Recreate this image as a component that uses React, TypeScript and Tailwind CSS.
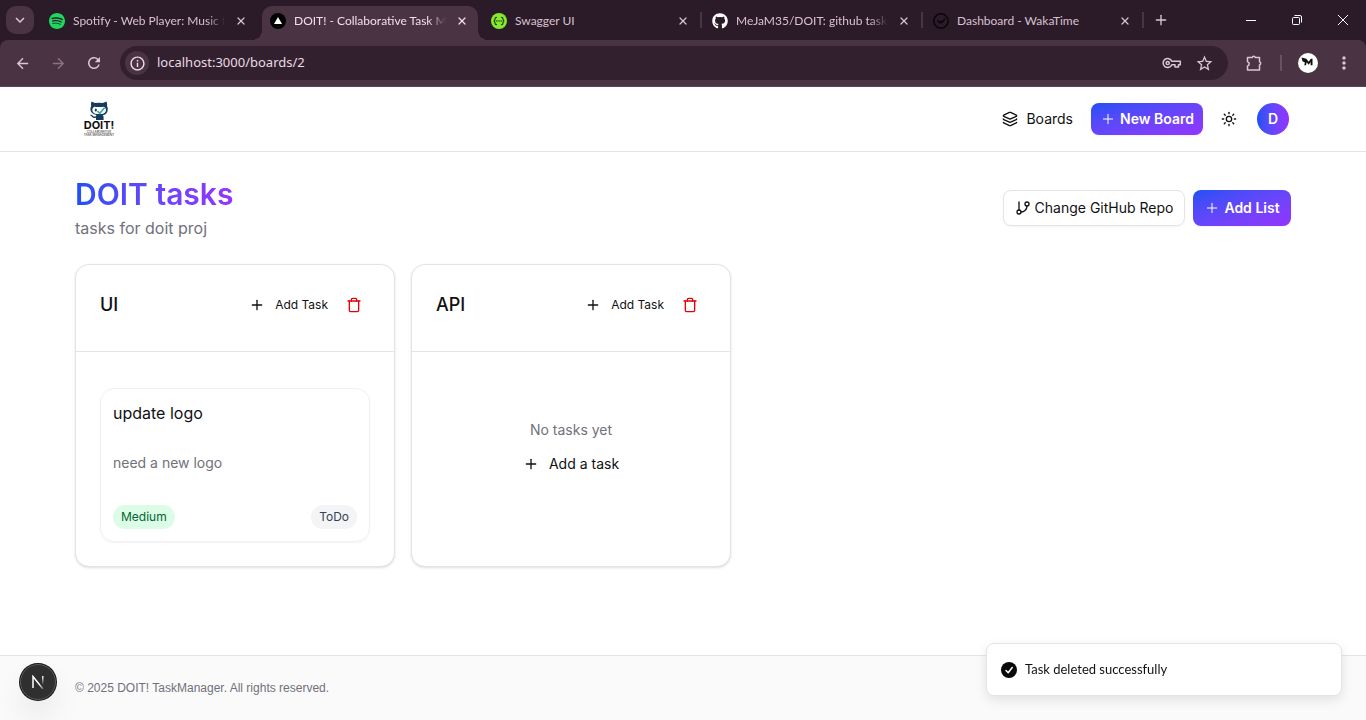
import type { ReactNode } from "react";
import { GitBranch, Layers, Plus, Sun, Trash, X } from "lucide-react";
import { FaGithub } from "react-icons/fa";
import { SiSpotify } from "react-icons/si";
import {
  MdArrowBack,
  MdArrowForward,
  MdInfoOutline,
  MdKeyboardArrowDown,
  MdMoreVert,
  MdRefresh,
  MdStarBorder,
} from "react-icons/md";

type Tab = { title: string; icon: ReactNode; active?: boolean; divider?: boolean; fade?: boolean };

const tabs: Tab[] = [
  {
    title: "Spotify - Web Player: Music f",
    fade: true,
    icon: <SiSpotify size={16} className="text-[#1ed760]" />,
  },
  {
    title: "DOIT! - Collaborative Task M",
    active: true,
    fade: true,
    icon: (
      <svg width="16" height="16" viewBox="0 0 16 16">
        <circle cx="8" cy="8" r="8" fill="#000" />
        <path d="M8 4l4 7H4z" fill="#fff" />
      </svg>
    ),
  },
  {
    title: "Swagger UI",
    divider: true,
    icon: (
      <svg width="16" height="16" viewBox="0 0 16 16" fill="none" stroke="#23401a" strokeLinecap="round">
        <circle cx="8" cy="8" r="8" fill="#85ea2d" stroke="none" />
        <path d="M5.500 4.300q-1.500 0-1.500 1.700T2.800 8q1.200.3 1.200 2t1.500 1.700M10.500 4.300q1.500 0 1.500 1.700t1.200 2q-1.200.3-1.200 2t-1.500 1.700" strokeWidth="1.200" />
        <path d="M5.800 8h.2M8 8h.1M10 8h.2" strokeWidth="1.400" />
      </svg>
    ),
  },
  {
    title: "MeJaM35/DOIT: github task",
    divider: true,
    fade: true,
    icon: <FaGithub size={16} className="text-white" />,
  },
  {
    title: "Dashboard - WakaTime",
    divider: true,
    icon: (
      <svg width="16" height="16" viewBox="0 0 16 16" fill="none" stroke="#0a0508" strokeWidth="1.500">
        <circle cx="8" cy="8" r="7.200" />
        <path d="M4.800 7.500l2 2.500 1.200-1.700.9 1.200L11.800 6" strokeWidth="1.300" strokeLinecap="round" strokeLinejoin="round" />
      </svg>
    ),
  },
];

function BrowserTab({ title, icon, active, divider, fade }: Tab) {
  return (
    <div className="relative flex h-[34px] w-[221px] min-w-0 pr-[5px]">
      {active && (
        <>
          <span className="absolute bottom-0 -left-2.5 size-2.5 bg-[radial-gradient(circle_at_0_0,transparent_10px,#4a3443_10px)]" />
          <span className="absolute right-[-5px] bottom-0 size-2.5 bg-[radial-gradient(circle_at_100%_0,transparent_10px,#4a3443_10px)]" />
        </>
      )}
      <div
        className={`flex min-w-0 flex-1 items-center gap-2 rounded-t-[10px] pr-2 pb-[5px] pl-2 ${active ? "bg-[#4a3443] text-[#f0dfe9]" : "text-[#d9c0d0]"}`}
      >
        <span className="shrink-0">{icon}</span>
        <span className={`min-w-0 flex-1 overflow-hidden text-xs whitespace-nowrap ${fade ? "mask-r-from-88%" : ""}`}>
          {title}
        </span>
        <button aria-label={`Close ${title}`} className="flex size-4 shrink-0 items-center justify-center">
          <X size={12} strokeWidth={2.5} />
        </button>
      </div>
      {divider && <span className="absolute top-1.5 right-0.5 h-4 w-0.5 bg-[#4a3443]" />}
    </div>
  );
}

function Browser() {
  return (
    <div className="bg-[#2b1b28] font-['Lato',sans-serif] text-[#dcc5d4]">
      <div className="flex h-10 items-end pl-1.5">
        <button aria-label="Search tabs" className="mb-1.5 flex size-7 items-center justify-center rounded-[10px] bg-[#4a3443]">
          <MdKeyboardArrowDown size={18} />
        </button>
        <div className="ml-[7px] flex min-w-0">
          {tabs.map((tab) => (
            <BrowserTab key={tab.title} {...tab} />
          ))}
        </div>
        <button aria-label="New tab" className="mb-[5px] flex h-[30px] w-[30px] items-center justify-center">
          <Plus size={16} />
        </button>
        <div className="ml-auto flex h-10 text-white">
          <button aria-label="Minimize" className="flex w-[46px] items-center justify-center">
            <svg width="10" height="10" stroke="currentColor"><path d="M0 5.500h10" /></svg>
          </button>
          <button aria-label="Restore" className="flex w-[46px] items-center justify-center">
            <svg width="10" height="10" fill="none" stroke="currentColor">
              <rect x=".5" y="2.500" width="7" height="7" rx="1" />
              <path d="M2.500.5H8q1.500 0 1.500 1.500v5.500" />
            </svg>
          </button>
          <button aria-label="Close window" className="flex w-[46px] items-center justify-center">
            <svg width="10" height="10" stroke="currentColor"><path d="M0 0l10 10M10 0L0 10" /></svg>
          </button>
        </div>
      </div>
      <div className="flex h-[47px] items-center rounded-t-lg border-b border-[#5b4655] bg-[#4a3443] pl-1">
        <button aria-label="Back" className="flex w-9 justify-center"><MdArrowBack size={17} /></button>
        <button aria-label="Forward" className="flex w-9 justify-center text-[#8b7283]"><MdArrowForward size={17} /></button>
        <button aria-label="Reload" className="flex w-9 justify-center"><MdRefresh size={18} /></button>
        <div className="ml-2 flex h-[34px] flex-1 items-center rounded-full bg-[#33202f] pr-4 pl-[5px]">
          <button aria-label="Site information" className="flex size-6 shrink-0 items-center justify-center rounded-full bg-[#4a3443] text-[#f0dfe9]">
            <MdInfoOutline size={17} />
          </button>
          <input
            aria-label="Address"
            defaultValue="localhost:3000/boards/2"
            className="ml-2 min-w-0 flex-1 bg-transparent font-['Noto_Sans',sans-serif] text-[13px] text-[#e9dbe4] outline-none"
          />
          <button aria-label="Passwords" className="flex w-8 justify-center">
            <svg width="20" height="12" viewBox="0 0 20 12" fill="none" stroke="currentColor" strokeWidth="1.500">
              <path d="M9.800 4.300A4.500 4.500 0 1 0 9.800 7.700H13V10h3.500V7.700H18.300V4.300z" strokeLinejoin="round" />
              <circle cx="5.700" cy="6" r="1.600" />
            </svg>
          </button>
          <button aria-label="Bookmark this tab" className="-mr-2 flex w-8 justify-center"><MdStarBorder size={19} /></button>
        </div>
        <button aria-label="Extensions" className="ml-2 flex w-9 justify-center">
          <svg width="18" height="18" viewBox="0 0 18 18" fill="none" stroke="currentColor" strokeWidth="1.500" strokeLinejoin="round">
            <path d="M2.500 3.500h4.700a1.600 1.600 0 0 1 3.100 0H14.500v4.300a1.600 1.600 0 0 1 0 3.100V16H2.500v-4a2.200 2.200 0 0 0 0-4.300z" />
          </svg>
        </button>
        <span className="mx-2 h-4 w-0.5 bg-[#69525f]" />
        <button aria-label="Profile" className="flex w-9 justify-center">
          <svg width="20" height="20" viewBox="0 0 20 20">
            <circle cx="10" cy="10" r="10" fill="#fff" />
            <path d="M3.500 4.500l4.800 1.300 2.400 2.900L12.800 5.800H14.500v6.400h-1.900V9L10.700 11.700 8.700 9.200 8 12.200H6.300l.6-2.700L4.500 8.200z" fill="#111" />
          </svg>
        </button>
        <button aria-label="Menu" className="flex w-9 justify-center"><MdMoreVert size={20} /></button>
        <span className="w-1" />
      </div>
    </div>
  );
}

function Logo() {
  return (
    <a href="#" className="flex w-12 flex-col items-center" aria-label="DOIT! home">
      <svg width="20" height="19" viewBox="0 0 20 19">
        <path
          d="M2.500.5l3.400 1.600q4-.7 8 0L17.500.5q.9 2.200.5 4.600 1.200 1.900.7 4.400-.8 4-4.900 4.700.9 1 .8 2.300v2.500H7v-2.200q-3 .5-4.300-1.400L1 14q1.700-.5 3 .9 1.200 1 3 .3l.3-1.300Q2.500 13 1.500 9.500 1 7 2.200 5.100 1.700 2.700 2.500.5z"
          fill="#153c5b"
        />
        <path d="M5.300 5.700q4.700.6 9.500 0 2.200.7 2.200 3.300-.2 3.700-4.700 4H8q-4.400-.3-4.700-4 0-2.600 2-3.300z" fill="#fff" />
        <ellipse cx="6.800" cy="9" rx="1.100" ry="1.600" fill="#153c5b" />
        <path d="M8.500 10l2.300 2.300 4.700-5.500" fill="none" stroke="#36a6a0" strokeWidth="1.600" />
      </svg>
      <span className="text-[11px] leading-[11px] font-bold">DOIT!</span>
      <span className="text-center text-[3px] leading-[3px]">
        COLLABORATIVE
        <br />
        TASK MANAGEMENT
      </span>
    </a>
  );
}

function ListCard({ title, children }: { title: string; children: ReactNode }) {
  return (
    <section className="flex w-80 flex-col rounded-[14px] border border-[#e4e4e7] bg-white shadow-sm">
      <div className="flex items-start justify-between border-b border-[#e4e4e7] px-6 pt-6 pb-[30px]">
        <h2 className="text-lg leading-8 font-medium">{title}</h2>
        <div className="flex items-center">
          <button className="flex h-8 items-center gap-2.5 px-2.5 text-xs">
            <Plus size={16} />
            Add Task
          </button>
          <button aria-label={`Delete ${title}`} className="flex h-8 w-8 items-center justify-center text-[#e7000b]">
            <Trash size={16} />
          </button>
        </div>
      </div>
      {children}
    </section>
  );
}

export default function App() {
  return (
    <div className="flex min-h-screen flex-col bg-white font-['Inter',sans-serif] text-[#111113]">
      <Browser />
      <header className="border-b border-[#e4e4e7]">
        <div className="mx-auto flex h-16 w-full max-w-7xl items-center justify-between px-8">
          <Logo />
          <nav className="flex items-center gap-2 text-sm">
            <a href="#" className="flex h-8 items-center gap-2 px-2.5">
              <Layers size={16} />
              Boards
            </a>
            <button className="flex h-8 w-28 items-center justify-center gap-1 rounded-lg bg-linear-to-br from-[#1c4ff5] to-[#9333ff] font-semibold whitespace-nowrap text-white shadow-xs">
              <Plus size={16} strokeWidth={1.5} />
              New Board
            </button>
            <button aria-label="Toggle theme" className="flex size-9 items-center justify-center">
              <Sun size={16} />
            </button>
            <button className="mr-0.5 ml-0.5 size-8 rounded-full bg-linear-to-r from-[#1c4ff5] to-[#9333ff] font-semibold text-white">
              D
            </button>
          </nav>
        </div>
      </header>

      <main className="mx-auto w-full max-w-7xl flex-1 px-8 py-6">
        <div className="mb-6 flex items-center justify-between">
          <div>
            <h1 className="w-fit bg-linear-to-r from-[#1c4ff5] to-[#9333ff] bg-clip-text text-3xl leading-9 font-semibold text-transparent">
              DOIT tasks
            </h1>
            <p className="mt-1 text-base text-[#71717b]">tasks for doit proj</p>
          </div>
          <div className="flex gap-2 text-sm">
            <button className="flex h-9 w-[182px] items-center justify-center gap-1 rounded-lg border border-[#e4e4e7] whitespace-nowrap shadow-xs">
              <GitBranch size={16} />
              Change GitHub Repo
            </button>
            <button className="flex h-9 w-[98px] items-center justify-center gap-1 rounded-lg bg-linear-to-br from-[#1c4ff5] to-[#9333ff] font-semibold whitespace-nowrap text-white shadow-xs">
              <Plus size={16} strokeWidth={1.5} />
              Add List
            </button>
          </div>
        </div>

        <div className="flex gap-4">
          <ListCard title="UI">
            <div className="px-6 pt-9 pb-6">
              <article className="rounded-[14px] border border-[#f0f0f2] p-3 shadow-xs">
                <h3 className="text-base leading-6">update logo</h3>
                <p className="mt-7 text-sm text-[#71717b]">need a new logo</p>
                <div className="mt-8 flex justify-between text-xs">
                  <span className="rounded-full bg-[#dcfce7] px-2 py-1 text-[#016630]">Medium</span>
                  <span className="rounded-full bg-[#f3f4f6] px-2 py-1 text-[#364153]">ToDo</span>
                </div>
              </article>
            </div>
          </ListCard>
          <ListCard title="API">
            <div className="flex flex-col items-center pt-[68px] text-sm">
              <p className="text-[#71717b]">No tasks yet</p>
              <button className="mt-2 flex h-8 items-center gap-2.5">
                <Plus size={16} />
                Add a task
              </button>
            </div>
          </ListCard>
        </div>
      </main>

      <footer className="border-t border-[#e4e4e7] bg-[#fafafa]">
        <p className="mx-auto w-full max-w-7xl px-8 py-6 font-['Liberation_Sans',sans-serif] text-xs text-[#71717b]">
          © 2025 DOIT! TaskManager. All rights reserved.
        </p>
      </footer>

      <button
        aria-label="Open developer tools"
        className="fixed bottom-5 left-5 flex size-9 items-center justify-center rounded-full border border-[#5a5a5a] bg-[#2f2f2f] shadow-[0_0_0_1px_#171717,0_16px_32px_-8px_rgba(0,0,0,0.24)]"
      >
        <svg width="14" height="14" viewBox="0 0 14 14" fill="none" strokeWidth="1.500">
          <defs>
            <linearGradient id="n-diagonal" x1="0" y1="0" x2="1" y2="1">
              <stop offset=".6" stopColor="#fff" />
              <stop offset="1" stopColor="#fff" stopOpacity=".3" />
            </linearGradient>
            <linearGradient id="n-stem" x1="0" y1="0" x2="0" y2="1">
              <stop stopColor="#fff" />
              <stop offset="1" stopColor="#fff" stopOpacity="0" />
            </linearGradient>
          </defs>
          <path d="M2 13V1.500L12 14" stroke="url(#n-diagonal)" />
          <rect x="11" y="1" width="1.500" height="9" fill="url(#n-stem)" />
        </svg>
      </button>

      <div
        role="status"
        className="fixed right-6 bottom-6 flex h-[53px] w-[356px] items-center gap-2 rounded-lg border border-[#e4e4e7] bg-white px-3.5 font-['Lato',sans-serif] text-[13px] shadow-[0_4px_12px_rgba(0,0,0,0.1)]"
      >
        <svg width="16" height="16" viewBox="0 0 16 16">
          <circle cx="8" cy="8" r="8" fill="#09090b" />
          <path d="M5 8.500l2.200 2.200L11.200 5.500" fill="none" stroke="#fff" strokeWidth="1.500" strokeLinecap="round" strokeLinejoin="round" />
        </svg>
        Task deleted successfully
      </div>
    </div>
  );
}
